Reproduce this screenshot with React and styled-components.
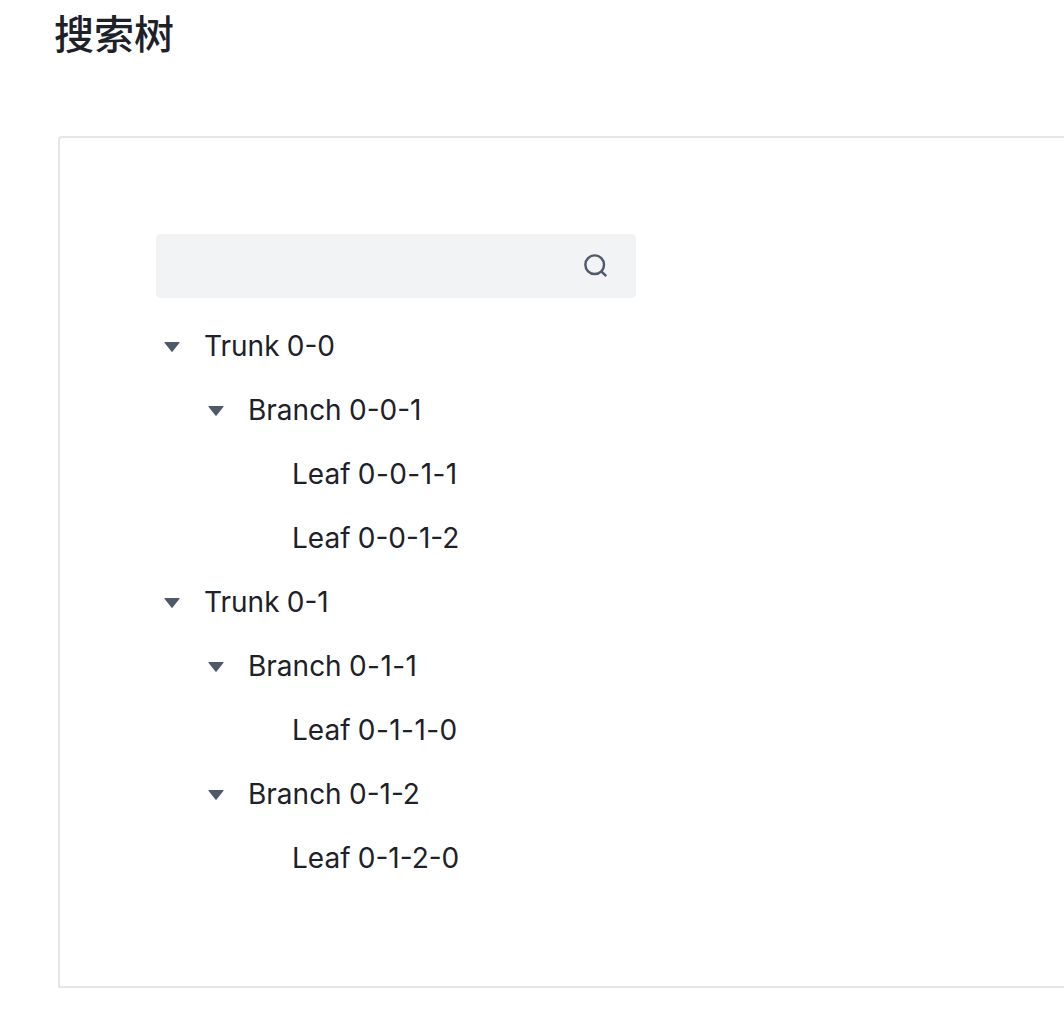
import React from "react";
import styled, { createGlobalStyle } from "styled-components";

const GlobalStyle = createGlobalStyle`
  * { box-sizing: border-box; }
  body { margin: 0; background: #fff; overflow: hidden; }
`;

const Page = styled.main`
  width: 100%;
  height: 1026px;
  padding-left: 54px;
  overflow: hidden;
  color: #1d2129;
  font-family: Inter, "Noto Sans CJK SC", sans-serif;
`;

const Title = styled.h2`
  margin: 0;
  height: 136px;
  padding-top: 5px;
  font-size: 40px;
  line-height: 60px;
  font-weight: 500;
`;

const Demo = styled.section`
  width: 1100px;
  height: 852px;
  margin-left: 4px;
  padding: 96px;
  border: 2px solid #e5e6eb;
  border-radius: 4px 0 0 0;
`;

const SearchBox = styled.label`
  display: flex;
  align-items: center;
  width: 480px;
  height: 64px;
  padding: 0 26px 0 24px;
  background: #f2f3f5;
  border-radius: 4px;
`;

const SearchInput = styled.input`
  flex: 1;
  min-width: 0;
  border: 0;
  outline: 0;
  background: transparent;
  font: inherit;
  font-size: 28px;
`;

const SearchIcon = styled.svg`
  width: 28px;
  height: 28px;
  fill: none;
  stroke: #4e5969;
  stroke-width: 4.2;
`;

const Tree = styled.div`
  display: flex;
  flex-direction: column;
  margin-top: 16px;
`;

const Row = styled.div`
  display: flex;
  align-items: center;
  height: 64px;
  padding-left: ${({ $level }) => $level * 44}px;
`;

const Switcher = styled.span`
  display: flex;
  width: 32px;
  justify-content: center;
  margin-right: 16px;
  padding-top: 2px;
`;

const Caret = styled.svg`
  width: 16px;
  height: 10px;
  fill: #4e5969;
`;

const Label = styled.span`
  font-size: 28px;
  font-weight: 380;
  line-height: 44px;
  white-space: pre;
  word-spacing: -0.6px;
`;

const Code = styled.span`
  letter-spacing: ${({ $loose }) => ($loose ? "0.45px" : "normal")};
`;

const nodes = [
  [0, "Trunk", "0-0"],
  [1, "Branch", "0-0-1"],
  [2, "Leaf", "0-0-1-1", true],
  [2, "Leaf", "0-0-1-2", true],
  [0, "Trunk", "0-1"],
  [1, "Branch", "0-1-1"],
  [2, "Leaf", "0-1-1-0", true],
  [1, "Branch", "0-1-2"],
  [2, "Leaf", "0-1-2-0", true],
];

export default function App() {
  return (
    <Page>
      <GlobalStyle />
      <Title>搜索树</Title>
      <Demo>
        <SearchBox>
          <SearchInput aria-label="搜索" />
          <SearchIcon viewBox="0 0 48 48">
            <path d="M33.072 33.071c6.248-6.248 6.248-16.379 0-22.627-6.249-6.249-16.38-6.249-22.628 0-6.248 6.248-6.248 16.379 0 22.627 6.248 6.248 16.38 6.248 22.628 0Zm0 0 8.485 8.485" />
          </SearchIcon>
        </SearchBox>
        <Tree>
          {nodes.map(([level, kind, code, leaf]) => (
            <Row key={code + kind} $level={level}>
              <Switcher>
                {!leaf && (
                  <Caret viewBox="0 0 16 10">
                    <path d="M0.8 0H15.2Q16 0 15.5 .8L8.6 9.6Q8 10.2 7.4 9.6L.5 .8Q0 0 .8 0Z" />
                  </Caret>
                )}
              </Switcher>
              <Label>{kind} <Code $loose={code.includes("1-1")}>{code}</Code></Label>
            </Row>
          ))}
        </Tree>
      </Demo>
    </Page>
  );
}
